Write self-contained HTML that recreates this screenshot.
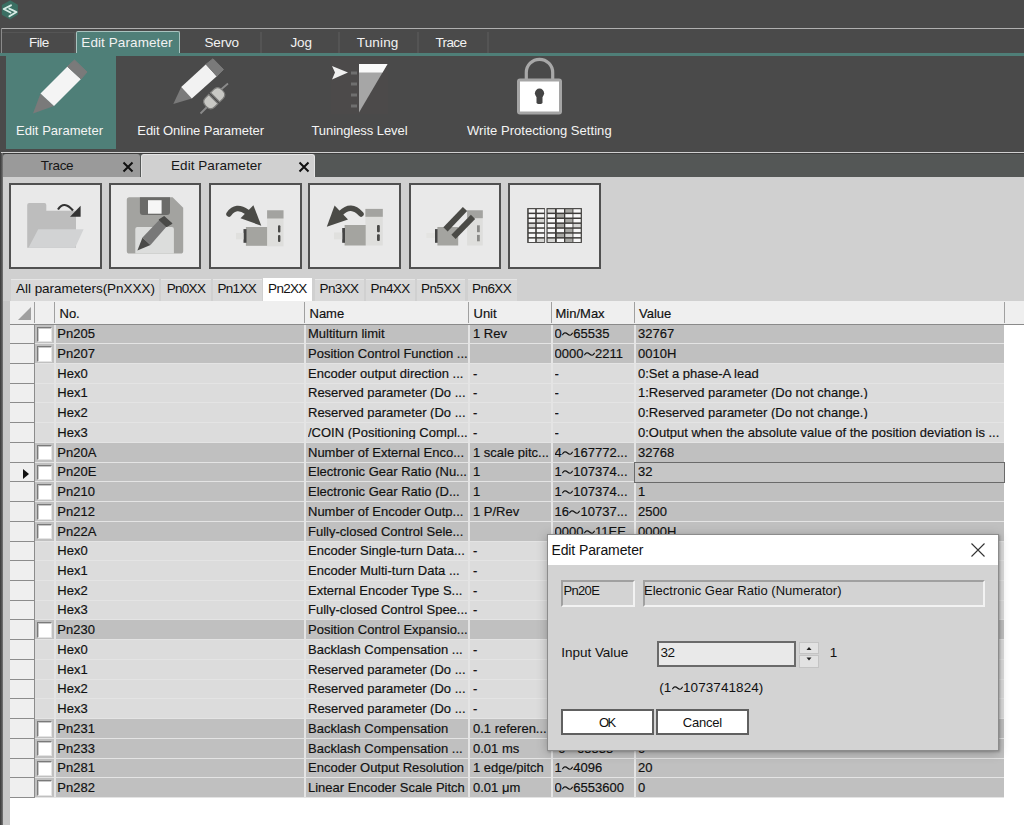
<!DOCTYPE html><html><head><meta charset="utf-8"><style>
*{margin:0;padding:0;box-sizing:border-box}
html,body{width:1024px;height:825px;overflow:hidden;background:#4a4a4a;position:relative;font-family:"Liberation Sans",sans-serif}
div{position:absolute}
.tx{white-space:nowrap;-webkit-text-stroke:0.18px currentColor}
.tl{display:inline-block;vertical-align:baseline;margin:0 0.3px 0 0.3px;position:relative;top:-1px}
.mline{left:1px;top:28px;width:1023px;height:1px;background:#b0b0b0}
.mvline{left:1px;top:28px;width:1px;height:28px;background:#8a8a8a}
.mtab{top:32px;height:21px;border-right:2px solid #545454}
.mtab.act{top:31px;height:22px;background:#4f7f78;border:1px solid #a9c3bf;border-bottom:none;border-radius:2px 2px 0 0}
.teal{left:0;top:53px;width:1024px;height:3px;background:#4f7f78}
.gline{left:1px;top:152px;width:1023px;height:1px;background:#d0d0d0}
.dline{left:0;top:153px;width:1024px;height:1px;background:#3c3c3c}
.dstrip{left:0;top:154px;width:1024px;height:23px;background:#545756}
.panel{left:3px;top:177px;width:1021px;height:648px;background:#d0d0d0}
.lstrip{left:0;top:153px;width:3px;height:672px;background:linear-gradient(90deg,#383838,#5a5a5a 60%,#7a7a7a)}
.lgray{left:3px;top:301px;width:7px;height:524px;background:#c8c8c8}
.btn{top:182.5px;width:92.8px;height:86.3px;border:2px solid #505050;background:#e9e9e9}
.ptab{top:278.5px;height:23px;background:#d9d9d9;border-top:1px solid #e6e6e6}
.ptab.act{background:#fff;top:278px;border-top:1px solid #fff}
.gridbg{left:10px;top:301px;width:1014px;height:524px;background:#fff}
.ghdr{background:#efefef}
.hline{width:1px;background:#a0a0a0}
.hbot{height:1.3px;background:#8a8a8a}
.gtri{left:17.5px;top:306.5px;width:0;height:0;border-left:13.5px solid transparent;border-bottom:13.5px solid #a0a0a0}
.row{left:35px;width:969px;height:19.73px;border-bottom:1.5px solid #e4e4e4}
.rpn{background:#c0c0c0}
.rhx{background:#dcdcdc}
.rh{left:10px;width:25px;height:19.73px;background:#efefef;border-bottom:1px solid #8c8c8c;border-right:1px solid #8c8c8c}
.cb{left:37px;width:14.5px;height:15.5px;background:#fff;border-top:1.5px solid #7a7a7a;border-left:1.5px solid #7a7a7a;border-right:1px solid #e4e4e4;border-bottom:1px solid #e4e4e4;box-shadow:inset 1px 1px 0 #c8c8c8}
.cline{width:1.5px;background:#e4e4e4}
.sel{left:634px;width:371px;height:21.5px;border:1.5px solid #6a6a6a;background:#c6c6c6}
.arrow{left:22.5px;width:0;height:0;border-top:5.6px solid transparent;border-bottom:5.6px solid transparent;border-left:6.5px solid #111}
.dlg{left:547px;top:534px;width:452px;height:217px;background:#d3d3d3;border:1px solid #8c8c8c;box-shadow:0 2px 10px rgba(0,0,0,0.25),1px 1px 2px rgba(0,0,0,0.2)}
.dtitle{left:0;top:0;width:450px;height:30px;background:#fff}
.sunk{border-top:2px solid #a0a0a0;border-left:2px solid #a0a0a0;border-bottom:2px solid #f2f2f2;border-right:2px solid #f2f2f2;background:#d3d3d3}
.dbtn{background:#fff;border:2px solid #606060}
</style></head><body>
<svg style="position:absolute;left:0;top:0" width="20" height="21" viewBox="0 0 20 21"><polygon points="10.3,0.2 17.9,4.8 17.9,14.6 10.1,19.6 1.8,14.7 1.8,5" fill="#3b6f63"/><path d="M11 5.3 L3.7 9 L10.5 12.5" fill="none" stroke="#d8ece6" stroke-width="1.9" stroke-linecap="round" stroke-linejoin="round"/><path d="M9.3 8.6 L16.5 12 L9.4 16.3" fill="none" stroke="#d8ece6" stroke-width="1.9" stroke-linecap="round" stroke-linejoin="round"/></svg>
<div class="mline"></div>
<div class="mvline"></div>
<div class="mtab" style="left:2px;width:74px;border-left:0;border-top:1px solid #555"></div>
<div class="mtab act" style="left:76px;width:104px"></div>
<div class="mtab" style="left:180px;width:82px"></div>
<div class="mtab" style="left:262px;width:78px"></div>
<div class="mtab" style="left:340px;width:79px"></div>
<div class="mtab" style="left:419px;width:70px"></div>
<div class="tx" style="left:29.10px;top:36.37px;font-size:13.5px;line-height:13.5px;color:#f2f2f2;letter-spacing:-0.551px;-webkit-text-stroke:0;">File</div>
<div class="tx" style="left:81.30px;top:36.37px;font-size:13.5px;line-height:13.5px;color:#f2f2f2;letter-spacing:0.089px;-webkit-text-stroke:0;">Edit Parameter</div>
<div class="tx" style="left:204.50px;top:36.37px;font-size:13.5px;line-height:13.5px;color:#f2f2f2;letter-spacing:-0.192px;-webkit-text-stroke:0;">Servo</div>
<div class="tx" style="left:290.50px;top:36.37px;font-size:13.5px;line-height:13.5px;color:#f2f2f2;letter-spacing:-0.133px;-webkit-text-stroke:0;">Jog</div>
<div class="tx" style="left:356.80px;top:36.37px;font-size:13.5px;line-height:13.5px;color:#f2f2f2;letter-spacing:0.144px;-webkit-text-stroke:0;">Tuning</div>
<div class="tx" style="left:435.50px;top:36.37px;font-size:13.5px;line-height:13.5px;color:#f2f2f2;letter-spacing:-0.627px;-webkit-text-stroke:0;">Trace</div>
<div class="teal"></div>
<div style="left:6px;top:56px;width:110px;height:93px;background:#4f7f78"></div>

<svg style="position:absolute;left:0;top:55px" width="620" height="66" viewBox="0 55 620 66">
 <g>
  <polygon points="33,113.5 40.5,93.5 54,106" fill="#7a7a7a"/>
  <polygon points="40.5,93.5 67.5,66.5 81,79 54,106" fill="#f4f4f4"/>
  <polygon points="67.5,66.5 74.5,60 87,72 81,79" fill="#7a7a7a" stroke="#7a7a7a" stroke-width="1" stroke-linejoin="round"/>
 </g>
 <g>
  <polygon points="173.3,104 181.2,87.1 191.8,98.5" fill="#7a7a7a"/>
  <polygon points="181.2,87.1 206,64.3 216.8,76.2 191.8,98.5" fill="#f2f2f2"/>
  <polygon points="206,64.3 213,58.8 223.5,69.5 216.8,76.2" fill="#7a7a7a" stroke="#7a7a7a" stroke-width="1" stroke-linejoin="round"/>
  <path d="M200.5 113.5 L207 107 M221 89.5 L228 83.5" stroke="#8a8a8a" stroke-width="1.8"/>
  <g transform="translate(214.2,98.2) rotate(45)">
   <path d="M-6.5 -1.2 V-6 Q-6.5 -11.5 0 -11.5 Q6.5 -11.5 6.5 -6 V-1.2 Z" fill="#c8c8c4" stroke="#7c7c7a" stroke-width="1.2"/>
   <path d="M-6.5 1.2 V6 Q-6.5 11.5 0 11.5 Q6.5 11.5 6.5 6 V1.2 Z" fill="#c8c8c4" stroke="#7c7c7a" stroke-width="1.2"/>
  </g>
 </g>
 <g>
  <rect x="331" y="58" width="57" height="56" fill="#4c4a4a"/>
  <polygon points="359,64 387.5,64 359,112.5" fill="#a6a6a6"/>
  <polygon points="359,64 387.5,64 382.5,72.5 359,72.5" fill="#fafafa"/>
  <rect x="351" y="71.5" width="6" height="3" fill="#6f6f6f"/>
  <rect x="351" y="82.5" width="6" height="3" fill="#6f6f6f"/>
  <rect x="351" y="93.5" width="6" height="3" fill="#6f6f6f"/>
  <rect x="351" y="104.5" width="6" height="3" fill="#6f6f6f"/>
  <polygon points="332,66 348,72.5 332,79.5 335,72.5" fill="#f0f0f0"/>
 </g>
 <g>
  <path d="M526.3 80 V72.5 A13.2 13.2 0 0 1 552.7 72.5 V80" fill="none" stroke="#a8a8a8" stroke-width="3.2"/>
  <rect x="518.5" y="79.9" width="42" height="33" rx="1.5" fill="#fff" stroke="#a5a5a5" stroke-width="3"/>
  <circle cx="539.5" cy="93.2" r="4.6" fill="#444"/>
  <rect x="536.5" y="94" width="6" height="10" rx="1.8" fill="#444"/>
 </g>
</svg>

<div class="tx" style="left:16.00px;top:123.60px;font-size:13px;line-height:13px;color:#f4f4f4;letter-spacing:0.023px;-webkit-text-stroke:0;">Edit Parameter</div>
<div class="tx" style="left:137.30px;top:123.60px;font-size:13px;line-height:13px;color:#f4f4f4;letter-spacing:-0.060px;-webkit-text-stroke:0;">Edit Online Parameter</div>
<div class="tx" style="left:311.40px;top:123.60px;font-size:13px;line-height:13px;color:#f4f4f4;letter-spacing:-0.058px;-webkit-text-stroke:0;">Tuningless Level</div>
<div class="tx" style="left:467.00px;top:123.60px;font-size:13px;line-height:13px;color:#f4f4f4;letter-spacing:0.044px;-webkit-text-stroke:0;">Write Protectiong Setting</div>
<div class="gline"></div>
<div class="dline"></div>
<div class="dstrip"></div>
<div class="panel"></div>
<div class="lstrip"></div>
<div style="left:3px;top:154px;width:137px;height:23px;background:#9a9a9a;border-radius:3px 3px 0 0"></div>
<div class="tx" style="left:40.80px;top:159.37px;font-size:13.5px;line-height:13.5px;color:#161616;letter-spacing:-0.302px;-webkit-text-stroke:0;">Trace</div>
<div style="left:121.5px;top:161px;width:12px;height:12px"><svg width="12" height="12" viewBox="0 0 12 12" style="position:absolute;top:0;left:0"><path d="M1.5 1.5 L10.5 10.5 M10.5 1.5 L1.5 10.5" stroke="#111" stroke-width="2"/></svg></div>
<div style="left:140.7px;top:154.4px;width:174.8px;height:22.6px;background:#d0d0d0;border:1px solid #e4e4e4;border-bottom:none;border-radius:3px 3px 0 0"></div>
<div class="tx" style="left:171.00px;top:159.37px;font-size:13.5px;line-height:13.5px;color:#161616;letter-spacing:0.058px;-webkit-text-stroke:0;">Edit Parameter</div>
<div style="left:297.5px;top:161px;width:12px;height:12px"><svg width="12" height="12" viewBox="0 0 12 12" style="position:absolute;top:0;left:0"><path d="M1.5 1.5 L10.5 10.5 M10.5 1.5 L1.5 10.5" stroke="#111" stroke-width="2"/></svg></div>
<div class="btn" style="left:9.2px"></div>
<div class="btn" style="left:108.7px"></div>
<div class="btn" style="left:209.2px"></div>
<div class="btn" style="left:308.3px"></div>
<div class="btn" style="left:408.6px"></div>
<div class="btn" style="left:508.3px"></div>

<svg style="position:absolute;left:0;top:182px" width="620" height="87" viewBox="0 182 620 87">
 <path d="M27.2 205 Q27.2 203.1 29.2 203.1 H44.5 Q46.3 203.1 46.3 205 V210.8 H76 V247.7 H27.2 Z" fill="#bdbdbd"/>
 <polygon points="38.2,229.2 83.6,229.2 75.1,247.7 28.5,247.7" fill="#d2d3d4"/>
 <path d="M58 209.5 Q64 200 73 210.5" fill="none" stroke="#333" stroke-width="2.2"/>
 <polygon points="70,216.7 80.6,205.7 80.6,216.7" fill="#333"/>

 <path d="M129 197.2 H172.6 L183.2 207.8 V251 Q183.2 253.6 180.6 253.6 H129.4 Q126.8 253.6 126.8 251 V199.8 Q126.8 197.2 129.4 197.2 Z" fill="#a3a3a0"/>
 <path d="M139.9 197.2 H170 V212 Q170 215 167 215 H142.9 Q139.9 215 139.9 212 Z" fill="#6b6b69"/>
 <rect x="148" y="200.2" width="13.6" height="13.5" fill="#f6f6f6"/>
 <path d="M137.3 226.9 H171.9 Q173.9 226.9 173.9 228.9 V253.6 H135.3 V228.9 Q135.3 226.9 137.3 226.9 Z" fill="#dcdddc"/>
 <polygon points="137.4,250.6 142.5,237.5 150.5,245.1" fill="#4a4a48"/>
 <polygon points="142.5,237.5 159.4,219.7 166.6,226.5 150.5,245.1" fill="#787878"/>
 <polygon points="159.4,219.7 164.1,216.7 171.7,223.5 166.6,226.5" fill="#4a4a48" stroke="#4a4a48" stroke-width="1.2" stroke-linejoin="round"/>

 <g>
  <rect x="267.1" y="210.3" width="16.4" height="36" fill="#dededc"/>
  <rect x="267.1" y="210.3" width="16.4" height="8.2" fill="#a3a3a0"/>
  <rect x="278" y="225.3" width="2.4" height="7.2" rx="1" fill="#4a4a48"/>
  <rect x="278" y="234.9" width="2.4" height="7.2" rx="1" fill="#4a4a48"/>
  <rect x="245.9" y="227" width="21.2" height="18.8" fill="#a4a4a0"/>
  <rect x="243.5" y="229.1" width="3" height="13.7" fill="#444"/>
  <rect x="236" y="232.9" width="7.5" height="6.5" fill="#e0e0de"/>
  <path d="M229 214 Q236 204 247 212" fill="none" stroke="#4a4a46" stroke-width="5.5" stroke-linecap="round"/>
  <polygon points="253.4,205.2 261.3,225.8 240.5,218.2" fill="#4a4a46"/>
 </g>
 <g>
  <rect x="365.4" y="208.9" width="17.4" height="36.6" fill="#dededc"/>
  <rect x="365.4" y="208.9" width="17.4" height="7.9" fill="#a3a3a0"/>
  <rect x="377" y="225" width="2.8" height="7.2" rx="1" fill="#4a4a48"/>
  <rect x="377" y="234.2" width="2.8" height="6.9" rx="1" fill="#4a4a48"/>
  <rect x="344.6" y="225" width="21.1" height="20.5" fill="#a4a4a0"/>
  <rect x="342.2" y="228" width="2.8" height="14.8" fill="#444"/>
  <rect x="334" y="232.5" width="8.2" height="6.9" fill="#e0e0de"/>
  <path d="M341 213 Q351 203 361 214" fill="none" stroke="#4a4a46" stroke-width="5.5" stroke-linecap="round"/>
  <polygon points="334.6,205.5 348,219.5 326.8,226.7" fill="#4a4a46"/>
 </g>
 <g>
  <rect x="467.1" y="210.3" width="15.7" height="35.2" fill="#dededc"/>
  <rect x="467.1" y="210.3" width="15.7" height="7.9" fill="#a3a3a0"/>
  <rect x="477" y="225.3" width="2.8" height="6.9" fill="#8a8a88"/>
  <rect x="477" y="234.9" width="2.8" height="6.4" fill="#8a8a88"/>
  <rect x="437.4" y="227" width="20.8" height="18.5" fill="#a4a4a0"/>
  <rect x="435" y="229.1" width="2.6" height="13.7" fill="#444"/>
  <rect x="426.4" y="232.9" width="8.6" height="5.1" fill="#e4e4e2"/>
  <path d="M445.5 229.3 L465 209" stroke="#4a4a46" stroke-width="6" stroke-linecap="butt"/>
  <path d="M453.5 236.8 L473 216.8" stroke="#4a4a46" stroke-width="6" stroke-linecap="butt"/>
 </g>
 <g>
  <rect x="527.2" y="208.1" width="17.7" height="34.8" fill="#3e3c3a"/>
  <rect x="546.5" y="208.1" width="35.4" height="34.8" fill="#3e3c3a"/>
  <rect x="528.7" y="209.2" width="6.5" height="3.4" fill="#f8f8f8"/>
<rect x="536.8" y="209.2" width="7.4" height="3.4" fill="#f8f8f8"/>
<rect x="547.6" y="209.2" width="7.4" height="3.4" fill="#d6d6d4"/>
<rect x="556.8" y="209.2" width="7.2" height="3.4" fill="#f8f8f8"/>
<rect x="565.3" y="209.2" width="7.2" height="3.4" fill="#a8a8a4"/>
<rect x="573.4" y="209.2" width="7.3" height="3.4" fill="#f8f8f8"/>
<rect x="528.7" y="214.1" width="6.5" height="3.4" fill="#f8f8f8"/>
<rect x="536.8" y="214.1" width="7.4" height="3.4" fill="#f8f8f8"/>
<rect x="547.6" y="214.1" width="7.4" height="3.4" fill="#f8f8f8"/>
<rect x="556.8" y="214.1" width="7.2" height="3.4" fill="#a8a8a4"/>
<rect x="565.3" y="214.1" width="7.2" height="3.4" fill="#f8f8f8"/>
<rect x="573.4" y="214.1" width="7.3" height="3.4" fill="#f8f8f8"/>
<rect x="528.7" y="219.0" width="6.5" height="3.4" fill="#f8f8f8"/>
<rect x="536.8" y="219.0" width="7.4" height="3.4" fill="#d6d6d4"/>
<rect x="547.6" y="219.0" width="7.4" height="3.4" fill="#f8f8f8"/>
<rect x="556.8" y="219.0" width="7.2" height="3.4" fill="#f8f8f8"/>
<rect x="565.3" y="219.0" width="7.2" height="3.4" fill="#a8a8a4"/>
<rect x="573.4" y="219.0" width="7.3" height="3.4" fill="#f8f8f8"/>
<rect x="528.7" y="223.9" width="6.5" height="3.4" fill="#d6d6d4"/>
<rect x="536.8" y="223.9" width="7.4" height="3.4" fill="#f8f8f8"/>
<rect x="547.6" y="223.9" width="7.4" height="3.4" fill="#f8f8f8"/>
<rect x="556.8" y="223.9" width="7.2" height="3.4" fill="#a8a8a4"/>
<rect x="565.3" y="223.9" width="7.2" height="3.4" fill="#f8f8f8"/>
<rect x="573.4" y="223.9" width="7.3" height="3.4" fill="#d6d6d4"/>
<rect x="528.7" y="228.8" width="6.5" height="3.4" fill="#f8f8f8"/>
<rect x="536.8" y="228.8" width="7.4" height="3.4" fill="#f8f8f8"/>
<rect x="547.6" y="228.8" width="7.4" height="3.4" fill="#f8f8f8"/>
<rect x="556.8" y="228.8" width="7.2" height="3.4" fill="#f8f8f8"/>
<rect x="565.3" y="228.8" width="7.2" height="3.4" fill="#a8a8a4"/>
<rect x="573.4" y="228.8" width="7.3" height="3.4" fill="#f8f8f8"/>
<rect x="528.7" y="233.7" width="6.5" height="3.4" fill="#f8f8f8"/>
<rect x="536.8" y="233.7" width="7.4" height="3.4" fill="#f8f8f8"/>
<rect x="547.6" y="233.7" width="7.4" height="3.4" fill="#f8f8f8"/>
<rect x="556.8" y="233.7" width="7.2" height="3.4" fill="#a8a8a4"/>
<rect x="565.3" y="233.7" width="7.2" height="3.4" fill="#d6d6d4"/>
<rect x="573.4" y="233.7" width="7.3" height="3.4" fill="#f8f8f8"/>
<rect x="528.7" y="238.6" width="6.5" height="3.4" fill="#f8f8f8"/>
<rect x="536.8" y="238.6" width="7.4" height="3.4" fill="#d6d6d4"/>
<rect x="547.6" y="238.6" width="7.4" height="3.4" fill="#d6d6d4"/>
<rect x="556.8" y="238.6" width="7.2" height="3.4" fill="#f8f8f8"/>
<rect x="565.3" y="238.6" width="7.2" height="3.4" fill="#a8a8a4"/>
<rect x="573.4" y="238.6" width="7.3" height="3.4" fill="#f8f8f8"/>
 </g>
</svg>

<div class="ptab" style="left:11.4px;width:147.7px"></div>
<div class="tx" style="left:16.00px;top:281.97px;font-size:13.5px;line-height:13.5px;color:#111;letter-spacing:-0.028px;-webkit-text-stroke:0;">All parameters(PnXXX)</div>
<div class="ptab" style="left:161.4px;width:49.2px"></div>
<div class="tx" style="left:166.70px;top:281.97px;font-size:13.5px;line-height:13.5px;color:#111;letter-spacing:-0.708px;-webkit-text-stroke:0;">Pn0XX</div>
<div class="ptab" style="left:212.9px;width:48.7px"></div>
<div class="tx" style="left:217.50px;top:281.97px;font-size:13.5px;line-height:13.5px;color:#111;letter-spacing:-0.708px;-webkit-text-stroke:0;">Pn1XX</div>
<div class="ptab act" style="left:263.4px;width:48.6px"></div>
<div class="tx" style="left:268.10px;top:281.97px;font-size:13.5px;line-height:13.5px;color:#111;letter-spacing:-0.708px;-webkit-text-stroke:0;">Pn2XX</div>
<div class="ptab" style="left:314.7px;width:49.3px"></div>
<div class="tx" style="left:319.60px;top:281.97px;font-size:13.5px;line-height:13.5px;color:#111;letter-spacing:-0.633px;-webkit-text-stroke:0;">Pn3XX</div>
<div class="ptab" style="left:366.2px;width:48.4px"></div>
<div class="tx" style="left:370.50px;top:281.97px;font-size:13.5px;line-height:13.5px;color:#111;letter-spacing:-0.558px;-webkit-text-stroke:0;">Pn4XX</div>
<div class="ptab" style="left:416.7px;width:48.3px"></div>
<div class="tx" style="left:421.00px;top:281.97px;font-size:13.5px;line-height:13.5px;color:#111;letter-spacing:-0.583px;-webkit-text-stroke:0;">Pn5XX</div>
<div class="ptab" style="left:467.6px;width:49px"></div>
<div class="tx" style="left:472.10px;top:281.97px;font-size:13.5px;line-height:13.5px;color:#111;letter-spacing:-0.608px;-webkit-text-stroke:0;">Pn6XX</div>
<div class="gridbg"></div>
<div class="lgray"></div>
<div class="ghdr" style="left:10px;top:301px;width:1014px;height:23px"></div>
<div class="gtri"></div>
<div class="hline" style="left:34px;top:302px;height:21px"></div>
<div class="hline" style="left:54px;top:302px;height:21px"></div>
<div class="hline" style="left:304px;top:302px;height:21px"></div>
<div class="hline" style="left:468px;top:302px;height:21px"></div>
<div class="hline" style="left:551px;top:302px;height:21px"></div>
<div class="hline" style="left:634px;top:302px;height:21px"></div>
<div class="hline" style="left:1004px;top:302px;height:21px"></div>
<div class="tx" style="left:59.50px;top:306.80px;font-size:13px;line-height:13px;color:#111;">No.</div>
<div class="tx" style="left:309.50px;top:306.80px;font-size:13px;line-height:13px;color:#111;">Name</div>
<div class="tx" style="left:473.50px;top:306.80px;font-size:13px;line-height:13px;color:#111;">Unit</div>
<div class="tx" style="left:555.50px;top:306.80px;font-size:13px;line-height:13px;color:#111;">Min/Max</div>
<div class="tx" style="left:639.00px;top:306.80px;font-size:13px;line-height:13px;color:#111;">Value</div>
<div class="hbot" style="left:10px;top:323.8px;width:1014px"></div>
<div class="row rpn" style="top:325px;height:19.23px"></div>
<div class="rh" style="top:325px;height:19.23px"></div>
<div class="cb" style="top:326.50px"></div>
<div class="row rpn" style="top:344.23px"></div>
<div class="rh" style="top:344.23px"></div>
<div class="cb" style="top:346.23px"></div>
<div class="row rhx" style="top:363.96px"></div>
<div class="rh" style="top:363.96px"></div>
<div class="row rhx" style="top:383.69px"></div>
<div class="rh" style="top:383.69px"></div>
<div class="row rhx" style="top:403.42px"></div>
<div class="rh" style="top:403.42px"></div>
<div class="row rhx" style="top:423.15px"></div>
<div class="rh" style="top:423.15px"></div>
<div class="row rpn" style="top:442.88px"></div>
<div class="rh" style="top:442.88px"></div>
<div class="cb" style="top:444.88px"></div>
<div class="row rpn" style="top:462.61px"></div>
<div class="rh" style="top:462.61px"></div>
<div class="cb" style="top:464.61px"></div>
<div class="row rpn" style="top:482.34px"></div>
<div class="rh" style="top:482.34px"></div>
<div class="cb" style="top:484.34px"></div>
<div class="row rpn" style="top:502.07px"></div>
<div class="rh" style="top:502.07px"></div>
<div class="cb" style="top:504.07px"></div>
<div class="row rpn" style="top:521.80px"></div>
<div class="rh" style="top:521.80px"></div>
<div class="cb" style="top:523.80px"></div>
<div class="row rhx" style="top:541.53px"></div>
<div class="rh" style="top:541.53px"></div>
<div class="row rhx" style="top:561.26px"></div>
<div class="rh" style="top:561.26px"></div>
<div class="row rhx" style="top:580.99px"></div>
<div class="rh" style="top:580.99px"></div>
<div class="row rhx" style="top:600.72px"></div>
<div class="rh" style="top:600.72px"></div>
<div class="row rpn" style="top:620.45px"></div>
<div class="rh" style="top:620.45px"></div>
<div class="cb" style="top:622.45px"></div>
<div class="row rhx" style="top:640.18px"></div>
<div class="rh" style="top:640.18px"></div>
<div class="row rhx" style="top:659.91px"></div>
<div class="rh" style="top:659.91px"></div>
<div class="row rhx" style="top:679.64px"></div>
<div class="rh" style="top:679.64px"></div>
<div class="row rhx" style="top:699.37px"></div>
<div class="rh" style="top:699.37px"></div>
<div class="row rpn" style="top:719.10px"></div>
<div class="rh" style="top:719.10px"></div>
<div class="cb" style="top:721.10px"></div>
<div class="row rpn" style="top:738.83px"></div>
<div class="rh" style="top:738.83px"></div>
<div class="cb" style="top:740.83px"></div>
<div class="row rpn" style="top:758.56px"></div>
<div class="rh" style="top:758.56px"></div>
<div class="cb" style="top:760.56px"></div>
<div class="row rpn" style="top:778.29px"></div>
<div class="rh" style="top:778.29px"></div>
<div class="cb" style="top:780.29px"></div>
<div class="cline" style="left:54px;top:325px;height:473.02px"></div>
<div class="cline" style="left:304px;top:325px;height:473.02px"></div>
<div class="cline" style="left:468px;top:325px;height:473.02px"></div>
<div class="cline" style="left:551px;top:325px;height:473.02px"></div>
<div class="cline" style="left:634px;top:325px;height:473.02px"></div>
<div class="tx" style="left:57.30px;top:327.25px;font-size:13px;line-height:13px;color:#111;width:245px;overflow:hidden;">Pn205</div>
<div class="tx" style="left:308.00px;top:327.25px;font-size:13px;line-height:13px;color:#111;width:159px;overflow:hidden;">Multiturn limit</div>
<div class="tx" style="left:473.00px;top:327.25px;font-size:13px;line-height:13px;color:#111;width:77px;overflow:hidden;">1 Rev</div>
<div class="tx" style="left:554.50px;top:327.25px;font-size:13px;line-height:13px;color:#111;width:79px;overflow:hidden;">0<svg class="tl" width="11.0" height="6" viewBox="0 0 11 6"><path d="M0.4 4.2 C1.8 1.4 3.6 1.2 5.5 3 S9.3 4.8 10.6 1.8" fill="none" stroke="#111" stroke-width="1.15"/></svg>65535</div>
<div class="tx" style="left:638.00px;top:327.25px;font-size:13px;line-height:13px;color:#111;width:365px;overflow:hidden;">32767</div>
<div class="tx" style="left:57.30px;top:346.98px;font-size:13px;line-height:13px;color:#111;width:245px;overflow:hidden;">Pn207</div>
<div class="tx" style="left:308.00px;top:346.98px;font-size:13px;line-height:13px;color:#111;width:159px;overflow:hidden;">Position Control Function ...</div>
<div class="tx" style="left:554.50px;top:346.98px;font-size:13px;line-height:13px;color:#111;width:79px;overflow:hidden;">0000<svg class="tl" width="11.0" height="6" viewBox="0 0 11 6"><path d="M0.4 4.2 C1.8 1.4 3.6 1.2 5.5 3 S9.3 4.8 10.6 1.8" fill="none" stroke="#111" stroke-width="1.15"/></svg>2211</div>
<div class="tx" style="left:638.00px;top:346.98px;font-size:13px;line-height:13px;color:#111;width:365px;overflow:hidden;">0010H</div>
<div class="tx" style="left:57.30px;top:366.71px;font-size:13px;line-height:13px;color:#111;width:245px;overflow:hidden;">Hex0</div>
<div class="tx" style="left:308.00px;top:366.71px;font-size:13px;line-height:13px;color:#111;width:159px;overflow:hidden;">Encoder output direction ...</div>
<div class="tx" style="left:473.00px;top:366.71px;font-size:13px;line-height:13px;color:#111;width:77px;overflow:hidden;">-</div>
<div class="tx" style="left:554.50px;top:366.71px;font-size:13px;line-height:13px;color:#111;width:79px;overflow:hidden;">-</div>
<div class="tx" style="left:638.00px;top:366.71px;font-size:13px;line-height:13px;color:#111;width:365px;overflow:hidden;">0:Set a phase-A lead</div>
<div class="tx" style="left:57.30px;top:386.44px;font-size:13px;line-height:13px;color:#111;width:245px;overflow:hidden;">Hex1</div>
<div class="tx" style="left:308.00px;top:386.44px;font-size:13px;line-height:13px;color:#111;width:159px;overflow:hidden;">Reserved parameter (Do ...</div>
<div class="tx" style="left:473.00px;top:386.44px;font-size:13px;line-height:13px;color:#111;width:77px;overflow:hidden;">-</div>
<div class="tx" style="left:554.50px;top:386.44px;font-size:13px;line-height:13px;color:#111;width:79px;overflow:hidden;">-</div>
<div class="tx" style="left:638.00px;top:386.44px;font-size:13px;line-height:13px;color:#111;width:365px;overflow:hidden;">1:Reserved parameter (Do not change.)</div>
<div class="tx" style="left:57.30px;top:406.17px;font-size:13px;line-height:13px;color:#111;width:245px;overflow:hidden;">Hex2</div>
<div class="tx" style="left:308.00px;top:406.17px;font-size:13px;line-height:13px;color:#111;width:159px;overflow:hidden;">Reserved parameter (Do ...</div>
<div class="tx" style="left:473.00px;top:406.17px;font-size:13px;line-height:13px;color:#111;width:77px;overflow:hidden;">-</div>
<div class="tx" style="left:554.50px;top:406.17px;font-size:13px;line-height:13px;color:#111;width:79px;overflow:hidden;">-</div>
<div class="tx" style="left:638.00px;top:406.17px;font-size:13px;line-height:13px;color:#111;width:365px;overflow:hidden;">0:Reserved parameter (Do not change.)</div>
<div class="tx" style="left:57.30px;top:425.90px;font-size:13px;line-height:13px;color:#111;width:245px;overflow:hidden;">Hex3</div>
<div class="tx" style="left:308.00px;top:425.90px;font-size:13px;line-height:13px;color:#111;width:159px;overflow:hidden;">/COIN (Positioning Compl...</div>
<div class="tx" style="left:473.00px;top:425.90px;font-size:13px;line-height:13px;color:#111;width:77px;overflow:hidden;">-</div>
<div class="tx" style="left:554.50px;top:425.90px;font-size:13px;line-height:13px;color:#111;width:79px;overflow:hidden;">-</div>
<div class="tx" style="left:638.00px;top:425.90px;font-size:13px;line-height:13px;color:#111;width:365px;overflow:hidden;">0:Output when the absolute value of the position deviation is ...</div>
<div class="tx" style="left:57.30px;top:445.63px;font-size:13px;line-height:13px;color:#111;width:245px;overflow:hidden;">Pn20A</div>
<div class="tx" style="left:308.00px;top:445.63px;font-size:13px;line-height:13px;color:#111;width:159px;overflow:hidden;">Number of External Enco...</div>
<div class="tx" style="left:473.00px;top:445.63px;font-size:13px;line-height:13px;color:#111;width:77px;overflow:hidden;">1 scale pitc...</div>
<div class="tx" style="left:554.50px;top:445.63px;font-size:13px;line-height:13px;color:#111;width:79px;overflow:hidden;">4<svg class="tl" width="11.0" height="6" viewBox="0 0 11 6"><path d="M0.4 4.2 C1.8 1.4 3.6 1.2 5.5 3 S9.3 4.8 10.6 1.8" fill="none" stroke="#111" stroke-width="1.15"/></svg>167772...</div>
<div class="tx" style="left:638.00px;top:445.63px;font-size:13px;line-height:13px;color:#111;width:365px;overflow:hidden;">32768</div>
<div class="sel" style="top:461.81px"></div>
<div class="arrow" style="top:469.01px"></div>
<div class="tx" style="left:57.30px;top:465.36px;font-size:13px;line-height:13px;color:#111;width:245px;overflow:hidden;">Pn20E</div>
<div class="tx" style="left:308.00px;top:465.36px;font-size:13px;line-height:13px;color:#111;width:159px;overflow:hidden;">Electronic Gear Ratio (Nu...</div>
<div class="tx" style="left:473.00px;top:465.36px;font-size:13px;line-height:13px;color:#111;width:77px;overflow:hidden;">1</div>
<div class="tx" style="left:554.50px;top:465.36px;font-size:13px;line-height:13px;color:#111;width:79px;overflow:hidden;">1<svg class="tl" width="11.0" height="6" viewBox="0 0 11 6"><path d="M0.4 4.2 C1.8 1.4 3.6 1.2 5.5 3 S9.3 4.8 10.6 1.8" fill="none" stroke="#111" stroke-width="1.15"/></svg>107374...</div>
<div class="tx" style="left:638.00px;top:465.36px;font-size:13px;line-height:13px;color:#111;width:365px;overflow:hidden;">32</div>
<div class="tx" style="left:57.30px;top:485.09px;font-size:13px;line-height:13px;color:#111;width:245px;overflow:hidden;">Pn210</div>
<div class="tx" style="left:308.00px;top:485.09px;font-size:13px;line-height:13px;color:#111;width:159px;overflow:hidden;">Electronic Gear Ratio (D...</div>
<div class="tx" style="left:473.00px;top:485.09px;font-size:13px;line-height:13px;color:#111;width:77px;overflow:hidden;">1</div>
<div class="tx" style="left:554.50px;top:485.09px;font-size:13px;line-height:13px;color:#111;width:79px;overflow:hidden;">1<svg class="tl" width="11.0" height="6" viewBox="0 0 11 6"><path d="M0.4 4.2 C1.8 1.4 3.6 1.2 5.5 3 S9.3 4.8 10.6 1.8" fill="none" stroke="#111" stroke-width="1.15"/></svg>107374...</div>
<div class="tx" style="left:638.00px;top:485.09px;font-size:13px;line-height:13px;color:#111;width:365px;overflow:hidden;">1</div>
<div class="tx" style="left:57.30px;top:504.82px;font-size:13px;line-height:13px;color:#111;width:245px;overflow:hidden;">Pn212</div>
<div class="tx" style="left:308.00px;top:504.82px;font-size:13px;line-height:13px;color:#111;width:159px;overflow:hidden;">Number of Encoder Outp...</div>
<div class="tx" style="left:473.00px;top:504.82px;font-size:13px;line-height:13px;color:#111;width:77px;overflow:hidden;">1 P/Rev</div>
<div class="tx" style="left:554.50px;top:504.82px;font-size:13px;line-height:13px;color:#111;width:79px;overflow:hidden;">16<svg class="tl" width="11.0" height="6" viewBox="0 0 11 6"><path d="M0.4 4.2 C1.8 1.4 3.6 1.2 5.5 3 S9.3 4.8 10.6 1.8" fill="none" stroke="#111" stroke-width="1.15"/></svg>10737...</div>
<div class="tx" style="left:638.00px;top:504.82px;font-size:13px;line-height:13px;color:#111;width:365px;overflow:hidden;">2500</div>
<div class="tx" style="left:57.30px;top:524.55px;font-size:13px;line-height:13px;color:#111;width:245px;overflow:hidden;">Pn22A</div>
<div class="tx" style="left:308.00px;top:524.55px;font-size:13px;line-height:13px;color:#111;width:159px;overflow:hidden;">Fully-closed Control Sele...</div>
<div class="tx" style="left:554.50px;top:524.55px;font-size:13px;line-height:13px;color:#111;width:79px;overflow:hidden;">0000<svg class="tl" width="11.0" height="6" viewBox="0 0 11 6"><path d="M0.4 4.2 C1.8 1.4 3.6 1.2 5.5 3 S9.3 4.8 10.6 1.8" fill="none" stroke="#111" stroke-width="1.15"/></svg>11EE</div>
<div class="tx" style="left:638.00px;top:524.55px;font-size:13px;line-height:13px;color:#111;width:365px;overflow:hidden;">0000H</div>
<div class="tx" style="left:57.30px;top:544.28px;font-size:13px;line-height:13px;color:#111;width:245px;overflow:hidden;">Hex0</div>
<div class="tx" style="left:308.00px;top:544.28px;font-size:13px;line-height:13px;color:#111;width:159px;overflow:hidden;">Encoder Single-turn Data...</div>
<div class="tx" style="left:473.00px;top:544.28px;font-size:13px;line-height:13px;color:#111;width:77px;overflow:hidden;">-</div>
<div class="tx" style="left:57.30px;top:564.01px;font-size:13px;line-height:13px;color:#111;width:245px;overflow:hidden;">Hex1</div>
<div class="tx" style="left:308.00px;top:564.01px;font-size:13px;line-height:13px;color:#111;width:159px;overflow:hidden;">Encoder Multi-turn Data ...</div>
<div class="tx" style="left:473.00px;top:564.01px;font-size:13px;line-height:13px;color:#111;width:77px;overflow:hidden;">-</div>
<div class="tx" style="left:57.30px;top:583.74px;font-size:13px;line-height:13px;color:#111;width:245px;overflow:hidden;">Hex2</div>
<div class="tx" style="left:308.00px;top:583.74px;font-size:13px;line-height:13px;color:#111;width:159px;overflow:hidden;">External Encoder Type S...</div>
<div class="tx" style="left:473.00px;top:583.74px;font-size:13px;line-height:13px;color:#111;width:77px;overflow:hidden;">-</div>
<div class="tx" style="left:57.30px;top:603.47px;font-size:13px;line-height:13px;color:#111;width:245px;overflow:hidden;">Hex3</div>
<div class="tx" style="left:308.00px;top:603.47px;font-size:13px;line-height:13px;color:#111;width:159px;overflow:hidden;">Fully-closed Control Spee...</div>
<div class="tx" style="left:473.00px;top:603.47px;font-size:13px;line-height:13px;color:#111;width:77px;overflow:hidden;">-</div>
<div class="tx" style="left:57.30px;top:623.20px;font-size:13px;line-height:13px;color:#111;width:245px;overflow:hidden;">Pn230</div>
<div class="tx" style="left:308.00px;top:623.20px;font-size:13px;line-height:13px;color:#111;width:159px;overflow:hidden;">Position Control Expansio...</div>
<div class="tx" style="left:57.30px;top:642.93px;font-size:13px;line-height:13px;color:#111;width:245px;overflow:hidden;">Hex0</div>
<div class="tx" style="left:308.00px;top:642.93px;font-size:13px;line-height:13px;color:#111;width:159px;overflow:hidden;">Backlash Compensation ...</div>
<div class="tx" style="left:473.00px;top:642.93px;font-size:13px;line-height:13px;color:#111;width:77px;overflow:hidden;">-</div>
<div class="tx" style="left:57.30px;top:662.66px;font-size:13px;line-height:13px;color:#111;width:245px;overflow:hidden;">Hex1</div>
<div class="tx" style="left:308.00px;top:662.66px;font-size:13px;line-height:13px;color:#111;width:159px;overflow:hidden;">Reserved parameter (Do ...</div>
<div class="tx" style="left:473.00px;top:662.66px;font-size:13px;line-height:13px;color:#111;width:77px;overflow:hidden;">-</div>
<div class="tx" style="left:57.30px;top:682.39px;font-size:13px;line-height:13px;color:#111;width:245px;overflow:hidden;">Hex2</div>
<div class="tx" style="left:308.00px;top:682.39px;font-size:13px;line-height:13px;color:#111;width:159px;overflow:hidden;">Reserved parameter (Do ...</div>
<div class="tx" style="left:473.00px;top:682.39px;font-size:13px;line-height:13px;color:#111;width:77px;overflow:hidden;">-</div>
<div class="tx" style="left:57.30px;top:702.12px;font-size:13px;line-height:13px;color:#111;width:245px;overflow:hidden;">Hex3</div>
<div class="tx" style="left:308.00px;top:702.12px;font-size:13px;line-height:13px;color:#111;width:159px;overflow:hidden;">Reserved parameter (Do ...</div>
<div class="tx" style="left:473.00px;top:702.12px;font-size:13px;line-height:13px;color:#111;width:77px;overflow:hidden;">-</div>
<div class="tx" style="left:57.30px;top:721.85px;font-size:13px;line-height:13px;color:#111;width:245px;overflow:hidden;">Pn231</div>
<div class="tx" style="left:308.00px;top:721.85px;font-size:13px;line-height:13px;color:#111;width:159px;overflow:hidden;">Backlash Compensation</div>
<div class="tx" style="left:473.00px;top:721.85px;font-size:13px;line-height:13px;color:#111;width:77px;overflow:hidden;">0.1 referen...</div>
<div class="tx" style="left:57.30px;top:741.58px;font-size:13px;line-height:13px;color:#111;width:245px;overflow:hidden;">Pn233</div>
<div class="tx" style="left:308.00px;top:741.58px;font-size:13px;line-height:13px;color:#111;width:159px;overflow:hidden;">Backlash Compensation ...</div>
<div class="tx" style="left:473.00px;top:741.58px;font-size:13px;line-height:13px;color:#111;width:77px;overflow:hidden;">0.01 ms</div>
<div class="tx" style="left:558.20px;top:741.58px;font-size:13px;line-height:13px;color:#111;width:79px;overflow:hidden;">0<svg class="tl" width="11.0" height="6" viewBox="0 0 11 6"><path d="M0.4 4.2 C1.8 1.4 3.6 1.2 5.5 3 S9.3 4.8 10.6 1.8" fill="none" stroke="#111" stroke-width="1.15"/></svg>65535</div>
<div class="tx" style="left:638.00px;top:741.58px;font-size:13px;line-height:13px;color:#111;width:365px;overflow:hidden;">0</div>
<div class="tx" style="left:57.30px;top:761.31px;font-size:13px;line-height:13px;color:#111;width:245px;overflow:hidden;">Pn281</div>
<div class="tx" style="left:308.00px;top:761.31px;font-size:13px;line-height:13px;color:#111;width:159px;overflow:hidden;">Encoder Output Resolution</div>
<div class="tx" style="left:473.00px;top:761.31px;font-size:13px;line-height:13px;color:#111;width:77px;overflow:hidden;">1 edge/pitch</div>
<div class="tx" style="left:554.50px;top:761.31px;font-size:13px;line-height:13px;color:#111;width:79px;overflow:hidden;">1<svg class="tl" width="11.0" height="6" viewBox="0 0 11 6"><path d="M0.4 4.2 C1.8 1.4 3.6 1.2 5.5 3 S9.3 4.8 10.6 1.8" fill="none" stroke="#111" stroke-width="1.15"/></svg>4096</div>
<div class="tx" style="left:638.00px;top:761.31px;font-size:13px;line-height:13px;color:#111;width:365px;overflow:hidden;">20</div>
<div class="tx" style="left:57.30px;top:781.04px;font-size:13px;line-height:13px;color:#111;width:245px;overflow:hidden;">Pn282</div>
<div class="tx" style="left:308.00px;top:781.04px;font-size:13px;line-height:13px;color:#111;width:159px;overflow:hidden;">Linear Encoder Scale Pitch</div>
<div class="tx" style="left:473.00px;top:781.04px;font-size:13px;line-height:13px;color:#111;width:77px;overflow:hidden;">0.01 μm</div>
<div class="tx" style="left:554.50px;top:781.04px;font-size:13px;line-height:13px;color:#111;width:79px;overflow:hidden;">0<svg class="tl" width="11.0" height="6" viewBox="0 0 11 6"><path d="M0.4 4.2 C1.8 1.4 3.6 1.2 5.5 3 S9.3 4.8 10.6 1.8" fill="none" stroke="#111" stroke-width="1.15"/></svg>6553600</div>
<div class="tx" style="left:638.00px;top:781.04px;font-size:13px;line-height:13px;color:#111;width:365px;overflow:hidden;">0</div>
<div class="dlg">
<div class="dtitle"></div>
</div>
<div class="tx" style="left:551.40px;top:543.45px;font-size:14px;line-height:14px;color:#111;letter-spacing:-0.098px;-webkit-text-stroke:0;">Edit Parameter</div>
<svg style="position:absolute;left:970.5px;top:542.5px" width="14" height="14" viewBox="0 0 14 14"><path d="M0.5 0.5 L13.5 13.5 M13.5 0.5 L0.5 13.5" stroke="#333" stroke-width="1.1"/></svg>
<div class="sunk" style="left:561.4px;top:580.2px;width:73.6px;height:26.6px"></div>
<div class="tx" style="left:563.50px;top:583.70px;font-size:13px;line-height:13px;color:#111;letter-spacing:-0.683px;-webkit-text-stroke:0;">Pn20E</div>
<div class="sunk" style="left:642.9px;top:580.4px;width:341.9px;height:26.4px"></div>
<div class="tx" style="left:644.00px;top:583.70px;font-size:13px;line-height:13px;color:#111;letter-spacing:0.008px;-webkit-text-stroke:0;">Electronic Gear Ratio (Numerator)</div>
<div class="tx" style="left:561.30px;top:646.17px;font-size:13.5px;line-height:13.5px;color:#111;letter-spacing:-0.030px;-webkit-text-stroke:0;">Input Value</div>
<div style="left:657.4px;top:641.3px;width:138.6px;height:26.2px;background:#e9e9e9;border:2px solid #6a6a6a"></div>
<div class="tx" style="left:660.60px;top:645.57px;font-size:13.5px;line-height:13.5px;color:#111;letter-spacing:-0.517px;-webkit-text-stroke:0;">32</div>
<div style="left:798.8px;top:641.7px;width:20.2px;height:12.3px;background:#e2e2e2;border:1px solid #c4c4c4"></div>
<div style="left:798.8px;top:654.5px;width:20.2px;height:13px;background:#e2e2e2;border:1px solid #c4c4c4"></div>
<svg style="position:absolute;left:805px;top:645px" width="8" height="20" viewBox="0 0 8 20"><polygon points="4,2 6.5,5 1.5,5" fill="#222"/><polygon points="1.5,12.5 6.5,12.5 4,15.5" fill="#222"/></svg>
<div class="tx" style="left:829.70px;top:646.27px;font-size:13.5px;line-height:13.5px;color:#111;-webkit-text-stroke:0;">1</div>
<div class="tx" style="left:659.20px;top:681.17px;font-size:13.5px;line-height:13.5px;color:#111;letter-spacing:0.078px;-webkit-text-stroke:0;">(1<svg class="tl" width="11.0" height="6" viewBox="0 0 11 6"><path d="M0.4 4.2 C1.8 1.4 3.6 1.2 5.5 3 S9.3 4.8 10.6 1.8" fill="none" stroke="#111" stroke-width="1.15"/></svg>1073741824)</div>
<div class="dbtn" style="left:561.4px;top:709.3px;width:92.4px;height:26.2px"></div>
<div class="tx" style="left:599.00px;top:715.90px;font-size:13px;line-height:13px;color:#111;letter-spacing:-1.583px;-webkit-text-stroke:0;">OK</div>
<div class="dbtn" style="left:656px;top:709.3px;width:92.8px;height:26.2px"></div>
<div class="tx" style="left:682.80px;top:715.90px;font-size:13px;line-height:13px;color:#111;letter-spacing:-0.234px;-webkit-text-stroke:0;">Cancel</div>
</body></html>
